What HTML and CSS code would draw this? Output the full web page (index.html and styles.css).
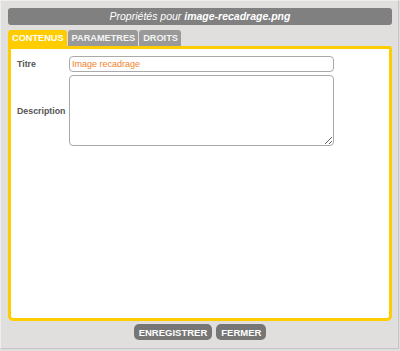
FILE: index.html
```html
<!DOCTYPE html>
<html lang="fr">

<head>
    <meta charset="UTF-8">
    <title>Propriétés</title>
    <link rel="stylesheet" href="styles.css">
</head>

<body>
    <div class="dialog">
        <div class="titlebar">Propriétés pour <b>image-recadrage.png</b></div>
        <div class="tabs">
            <span class="tab active">CONTENUS</span>
            <span class="tab">PARAMETRES</span>
            <span class="tab">DROITS</span>
        </div>
        <div class="panel">
            <div class="row">
                <label class="lbl">Titre</label>
                <input class="field" type="text" value="Image recadrage">
            </div>
            <div class="row">
                <label class="lbl">Description</label>
                <textarea class="field area"></textarea>
            </div>
        </div>
        <div class="actions">
            <button class="btn">ENREGISTRER</button>
            <button class="btn">FERMER</button>
        </div>
    </div>
</body>

</html>
```
FILE: styles.css
```css
html, body {
    margin: 0;
    height: 100%;
}

body {
    font-family: "Liberation Sans", Arial, sans-serif;
    background-color: #e0dfdd;
}

.dialog {
    box-sizing: border-box;
    width: 399px;
    height: 349px;
    border: 1px solid;
    border-color: #eeeeee #c4c4c4 #c4c4c4 #eeeeee;
    padding: 7px 6px 0 7px;
}

.titlebar {
    height: 17px;
    line-height: 17px;
    background: #808080;
    border-radius: 3px;
    color: #fff;
    font-style: italic;
    font-size: 10.5px;
    text-align: center;
}

.tabs {
    display: flex;
    gap: 1px;
    margin-top: 5px;
    height: 16px;
}

.tab {
    padding: 0 3px 0 4px;
    line-height: 17px;
    font-size: 9.2px;
    font-weight: bold;
    color: #f4f4f4;
    background: #999999;
    border-radius: 3px 3px 0 0;
}

.tab.active {
    background: #ffcc00;
    color: #fff;
}

.panel {
    height: 262px;
    background: #fff;
    border: 3px solid #ffcc00;
    border-radius: 0 3px 5px 5px;
    padding: 7px 0 0 6px;
}

.row {
    display: flex;
    align-items: center;
    margin-bottom: 3px;
}

.lbl {
    width: 52px;
    font-size: 8.8px;
    font-weight: bold;
    color: #555;
}

.field {
    display: block;
    box-sizing: border-box;
    width: 265px;
    height: 16px;
    margin: 0;
    border: 1px solid #aaa;
    border-radius: 4px;
    padding: 0 2px;
    font-family: "Liberation Sans", Arial, sans-serif;
    font-size: 9px;
    color: #f0822c;
}

.area {
    height: 71px;
    resize: vertical;
}

.actions {
    display: flex;
    justify-content: center;
    gap: 4px;
    margin-top: 3px;
}

.btn {
    height: 16px;
    padding: 0 5px;
    border: none;
    border-radius: 5px;
    background: #767676;
    color: #fff;
    font-family: "Liberation Sans", Arial, sans-serif;
    font-size: 9.5px;
    font-weight: bold;
}
```
